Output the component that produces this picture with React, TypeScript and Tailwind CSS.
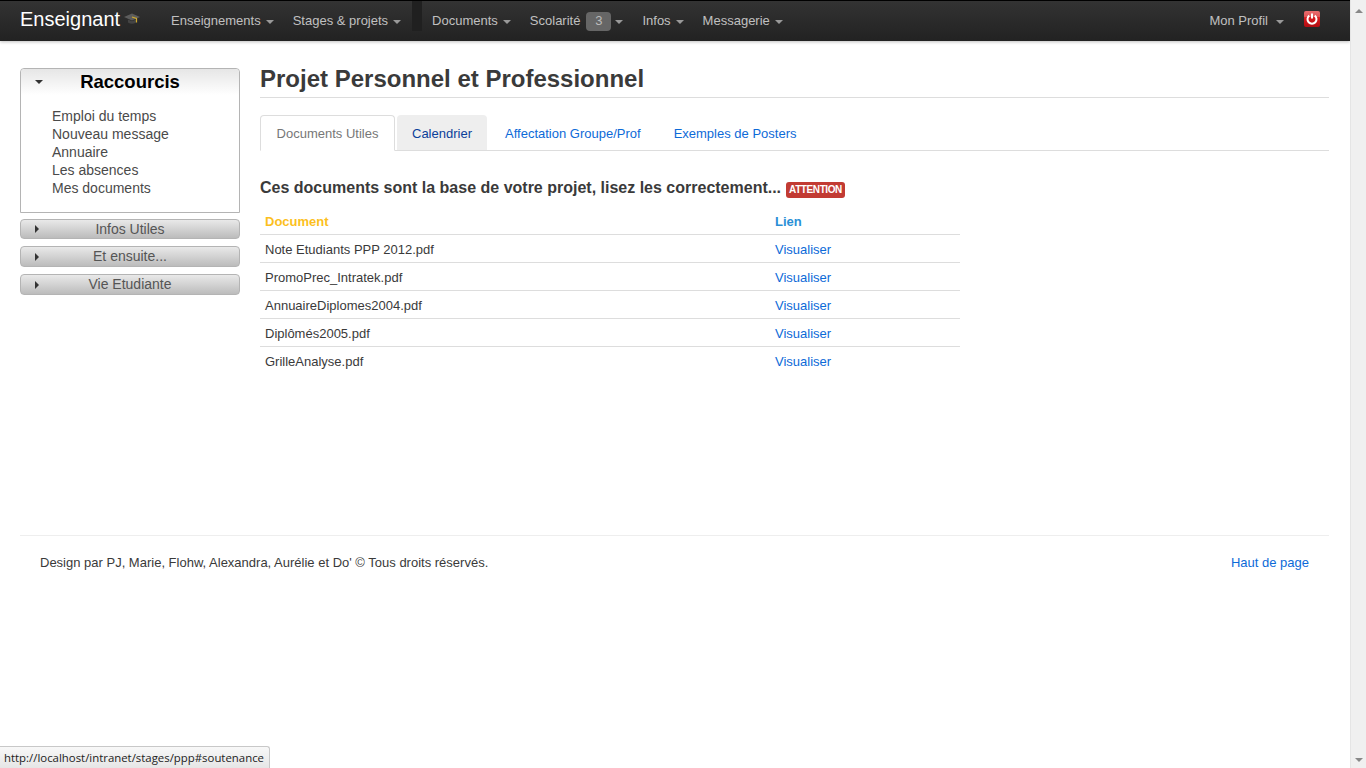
const shortcuts = ['Emploi du temps', 'Nouveau message', 'Annuaire', 'Les absences', 'Mes documents']
const documents = [
  'Note Etudiants PPP 2012.pdf',
  'PromoPrec_Intratek.pdf',
  'AnnuaireDiplomes2004.pdf',
  'Diplômés2005.pdf',
  'GrilleAnalyse.pdf',
]

function Caret() {
  return <span className="ml-[5px] mt-[1px] inline-block h-0 w-0 border-x-[4px] border-t-[4px] border-x-transparent border-t-[#999]" />
}

function NavItem({ label, className = '' }: { label: string; className?: string }) {
  return (
    <a className={`flex items-center text-[#c0c0c0] ${className}`}>
      {label}
      <Caret />
    </a>
  )
}

function CapIcon() {
  return (
    <svg width="16" height="12" viewBox="0 0 16 12" className="ml-[4px] mt-[-4px]">
      <path d="M0 4 L8 0.5 L16 4 L8 7.5 Z" fill="#5c5c5c" />
      <path d="M4 6.5 L4 9.5 Q8 12 12 9.5 L12 6.5 L8 8.2 Z" fill="#444" />
      <path d="M8 4 L12.5 5.5 L12.5 9.5" stroke="#d0aa2c" strokeWidth="1.2" fill="none" />
    </svg>
  )
}

function PowerIcon() {
  return (
    <span className="relative flex h-[16px] w-[16px] items-center justify-center overflow-hidden rounded-[2px] bg-gradient-to-b from-[#e4474b] via-[#d2181c] to-[#b00d12]">
      <span className="absolute inset-x-0 top-0 h-[6px] bg-white/20" />
      <svg width="14" height="14" viewBox="0 0 14 14" fill="none" stroke="#fff" strokeWidth="2" className="relative">
        <path d="M4.3 3.6 A4.5 4.5 0 1 0 9.7 3.6" />
        <path d="M7 1.5 V6.5" />
      </svg>
    </span>
  )
}

function SideHeader({ label, className = '' }: { label: string; className?: string }) {
  return (
    <div className={`flex items-center rounded-[4px] border border-[#b4b4b4] bg-gradient-to-b from-[#e9e9e9] to-[#bcbcbc] pl-[14px] text-[14px] text-[#555] ${className}`}>
      <span className="h-0 w-0 border-y-[4px] border-l-[4px] border-y-transparent border-l-[#333]" />
      <span className="flex-1 pr-[18px] text-center">{label}</span>
    </div>
  )
}

export default function App() {
  return (
    <div className="relative flex h-[768px] w-full overflow-hidden bg-white font-['Liberation_Sans',Arial,sans-serif] text-[13px] text-[#3a3a3a]">
      <div className="flex min-w-0 flex-1 flex-col">
        {/* Top bar */}
        <header className="flex h-[41px] shrink-0 items-center border-t border-black bg-gradient-to-b from-[#333] to-[#222] pl-[20px] pr-[30px] shadow-[0_1px_3px_rgba(0,0,0,0.25)]">
          <span className="mt-[-4px] text-[20px] text-white">Enseignant</span>
          <CapIcon />
          <nav className="ml-[31px] flex items-center">
            <NavItem label="Enseignements" className="mr-[19px]" />
            <NavItem label="Stages & projets" className="mr-[11px]" />
            <span className="mr-[10px] mt-[-10px] h-[30px] w-[10px] bg-[#202020]" />
            <NavItem label="Documents" className="mr-[19px]" />
            <a className="mr-[19px] flex items-center text-[#c0c0c0]">
              Scolarité
              <span className="ml-[6px] flex h-[19px] w-[25px] items-center justify-center rounded-[4px] bg-[#666] text-[#bbb]">3</span>
              <span className="ml-[4px] mt-[1px] inline-block h-0 w-0 border-x-[4px] border-t-[4px] border-x-transparent border-t-[#999]" />
            </a>
            <NavItem label="Infos" className="mr-[19px]" />
            <NavItem label="Messagerie" />
          </nav>
          <div className="ml-auto flex items-center pb-[2px]">
            <a className="flex items-center pt-[2px] text-[#c0c0c0]">
              Mon Profil
              <span className="ml-[8px] mt-[1px] h-0 w-0 border-x-[4px] border-t-[4px] border-x-transparent border-t-[#999]" />
            </a>
            <span className="ml-[20px] mt-[-3px]">
              <PowerIcon />
            </span>
          </div>
        </header>

        <div className="flex flex-1 flex-col pl-[20px] pr-[21px]">
          <div className="flex pt-[23px]">
            {/* Sidebar */}
            <aside className="mt-[4px] w-[220px] shrink-0 text-[14px]">
              <div className="h-[145px] rounded-t-[4px] border border-[#b4b4b4] bg-white">
                <div className="flex h-[26px] items-center rounded-t-[4px] bg-gradient-to-b from-[#e6e6e6] to-white pl-[14px]">
                  <span className="h-0 w-0 border-x-[4px] border-t-[4px] border-x-transparent border-t-[#333]" />
                  <span className="flex-1 pr-[22px] text-center text-[18.5px] font-bold text-black">Raccourcis</span>
                </div>
                <ul className="pl-[31px] pt-[12px] leading-[18px] text-[#4a4a4a]">
                  {shortcuts.map(s => (
                    <li key={s}>{s}</li>
                  ))}
                </ul>
              </div>
              <div className="mt-[6px] flex flex-col gap-[7px]">
                <SideHeader label="Infos Utiles" className="h-[20px]" />
                <SideHeader label="Et ensuite..." className="h-[21px]" />
                <SideHeader label="Vie Etudiante" className="h-[21px]" />
              </div>
            </aside>

            {/* Main content */}
            <main className="ml-[20px] min-w-0 flex-1">
              <h1 className="border-b border-[#ddd] pb-[4px] text-[24px] font-bold leading-[29px]">Projet Personnel et Professionnel</h1>
              <div className="mt-[17px] flex h-[36px] items-end border-b border-[#ddd]">
                <a className="flex h-[36px] w-[135px] translate-y-px items-center justify-center rounded-t-[4px] border border-[#ddd] border-b-white bg-white pt-[2px] text-[#777]">Documents Utiles</a>
                <a className="ml-[2px] flex h-[35px] w-[90px] items-center justify-center rounded-t-[4px] bg-[#eee] pt-[2px] text-[#0b3f9a]">Calendrier</a>
                <a className="ml-[18px] flex h-[35px] items-center pt-[2px] text-[#0d6ad8]">Affectation Groupe/Prof</a>
                <a className="ml-[33px] flex h-[35px] items-center pt-[2px] text-[#0d6ad8]">Exemples de Posters</a>
              </div>
              <h2 className="mt-[26px] flex items-center text-[16px] font-bold leading-[22px]">
                Ces documents sont la base de votre projet, lisez les correctement...
                <span className="ml-[5px] mt-[3px] rounded-[3px] bg-[#c23b33] px-[3px] text-[10px] font-bold leading-[16px] tracking-[-0.4px] text-white">ATTENTION</span>
              </h2>
              <table className="mt-[9px] w-[700px] table-fixed">
                <thead>
                  <tr className="h-[26px] text-left font-bold">
                    <th className="w-[510px] pl-[5px] pt-[2px] text-[#fcbf1e]">Document</th>
                    <th className="pl-[5px] pt-[2px] text-[#2a8fd6]">Lien</th>
                  </tr>
                </thead>
                <tbody>
                  {documents.map(d => (
                    <tr key={d} className="h-[28px] border-t border-[#ddd]">
                      <td className="pl-[5px] pt-[3px]">{d}</td>
                      <td className="pl-[5px] pt-[3px] text-[#0d6ad8]">Visualiser</td>
                    </tr>
                  ))}
                </tbody>
              </table>
            </main>
          </div>

          {/* Footer */}
          <footer className="mt-[161px] flex justify-between border-t border-[#eee] px-[20px] pt-[18px] leading-[18px]">
            <span>Design par PJ, Marie, Flohw, Alexandra, Aurélie et Do' © Tous droits réservés.</span>
            <a className="text-[#0d6ad8]">Haut de page</a>
          </footer>
        </div>
      </div>

      {/* Scrollbar */}
      <div className="flex w-[16px] shrink-0 flex-col items-center justify-between border-l border-[#e5e5e5] bg-[#f0f0f0] pb-[6px] pt-[9px]">
        <span className="h-0 w-0 border-x-[4px] border-b-[4px] border-x-transparent border-b-[#888]" />
        <span className="h-0 w-0 border-x-[4px] border-t-[4px] border-x-transparent border-t-[#888]" />
      </div>

      {/* Browser status tooltip */}
      <div className="absolute bottom-0 left-0 flex h-[22px] w-[270px] items-center rounded-tr-[3px] border border-b-0 border-l-0 border-[#c8c8c8] bg-gradient-to-b from-[#f8f8f8] to-[#e6e6e6] pl-[4px] font-['Open_Sans',sans-serif] text-[11.4px] text-[#222]">
        http://localhost/intranet/stages/ppp#soutenance
      </div>
    </div>
  )
}
